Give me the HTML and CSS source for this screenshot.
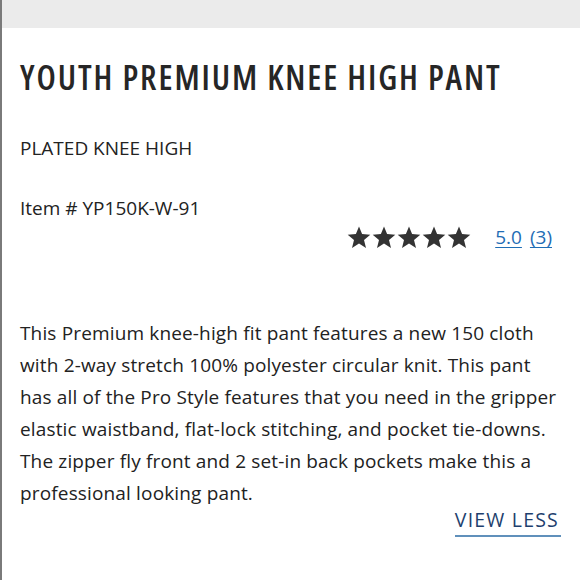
FILE: index.html
```html
<!DOCTYPE html>
<html>
<head>
<meta charset="utf-8">
<link rel="stylesheet" href="styles.css">
</head>
<body>
<div class="topbar"></div>
<main class="product">
  <h1 class="title">YOUTH PREMIUM KNEE HIGH PANT</h1>
  <p class="subtitle">PLATED KNEE HIGH</p>
  <p class="item">Item # YP150K-W-91</p>
  <div class="rating">
    <span class="stars">
      <svg viewBox="0 0 24 24" class="star"><path d="M12 1.5l3.1 7.6 8.2.6-6.3 5.3 2 8L12 18.6 5 23l2-8L.7 9.7l8.2-.6z"/></svg>
      <svg viewBox="0 0 24 24" class="star"><path d="M12 1.5l3.1 7.6 8.2.6-6.3 5.3 2 8L12 18.6 5 23l2-8L.7 9.7l8.2-.6z"/></svg>
      <svg viewBox="0 0 24 24" class="star"><path d="M12 1.5l3.1 7.6 8.2.6-6.3 5.3 2 8L12 18.6 5 23l2-8L.7 9.7l8.2-.6z"/></svg>
      <svg viewBox="0 0 24 24" class="star"><path d="M12 1.5l3.1 7.6 8.2.6-6.3 5.3 2 8L12 18.6 5 23l2-8L.7 9.7l8.2-.6z"/></svg>
      <svg viewBox="0 0 24 24" class="star"><path d="M12 1.5l3.1 7.6 8.2.6-6.3 5.3 2 8L12 18.6 5 23l2-8L.7 9.7l8.2-.6z"/></svg>
    </span>
    <a class="score" href="#">5.0</a>
    <a class="count" href="#">(3)</a>
  </div>
  <p class="desc">This Premium knee-high fit pant features a new 150 cloth with 2-way stretch 100% polyester circular knit. This pant has all of the Pro Style features that you need in the gripper elastic waistband, flat-lock stitching, and pocket tie-downs. The zipper fly front and 2 set-in back pockets make this a professional looking pant.</p>
  <div class="more"><a class="viewless" href="#">VIEW LESS</a></div>
</main>
</body>
</html>
```
FILE: styles.css
```css
html, body {
  margin: 0;
  padding: 0;
  background: #fff;
}
body {
  border-left: 2px solid #7a7a7a;
  min-height: 580px;
  box-sizing: border-box;
  font-family: "Open Sans", Lato, sans-serif;
  color: #222;
}
.topbar {
  height: 28px;
  background: #ebebeb;
}
.product {
  padding: 0 16px 0 18px;
}
.title {
  margin: 29px 0 0;
  font-family: "Open Sans", sans-serif;
  font-weight: 600;
  font-stretch: 75%;
  font-size: 34px;
  letter-spacing: 1.9px;
  line-height: 40px;
  color: #262626;
  white-space: nowrap;
}
.subtitle {
  margin: 39px 0 0;
  font-size: 19px;
  line-height: 24px;
}
.item {
  margin: 36px 0 0;
  font-size: 19px;
  line-height: 24px;
}
.rating {
  display: flex;
  justify-content: flex-end;
  align-items: center;
  margin-top: 3px;
  height: 28px;
  padding-right: 12px;
}
.stars {
  display: flex;
  gap: 1px;
  margin-right: 24px;
}
.star {
  width: 24px;
  height: 24px;
  fill: #333;
}
.rating a {
  font-size: 19px;
  color: #1f6db5;
  text-decoration: underline;
  text-underline-offset: 3px;
}
.score {
  margin-right: 8px;
}
.desc {
  margin: 66px 2px 0 0;
  font-size: 19px;
  letter-spacing: 0.15px;
  line-height: 32px;
}
.more {
  display: flex;
  justify-content: flex-end;
  margin-top: -3px;
  padding-right: 3px;
}
.viewless {
  color: #1e3f6e;
  font-size: 19.5px;
  letter-spacing: 1.2px;
  text-decoration: none;
  border-bottom: 2px solid #6090bb;
  padding: 0 2px 2px 0;
}
```
